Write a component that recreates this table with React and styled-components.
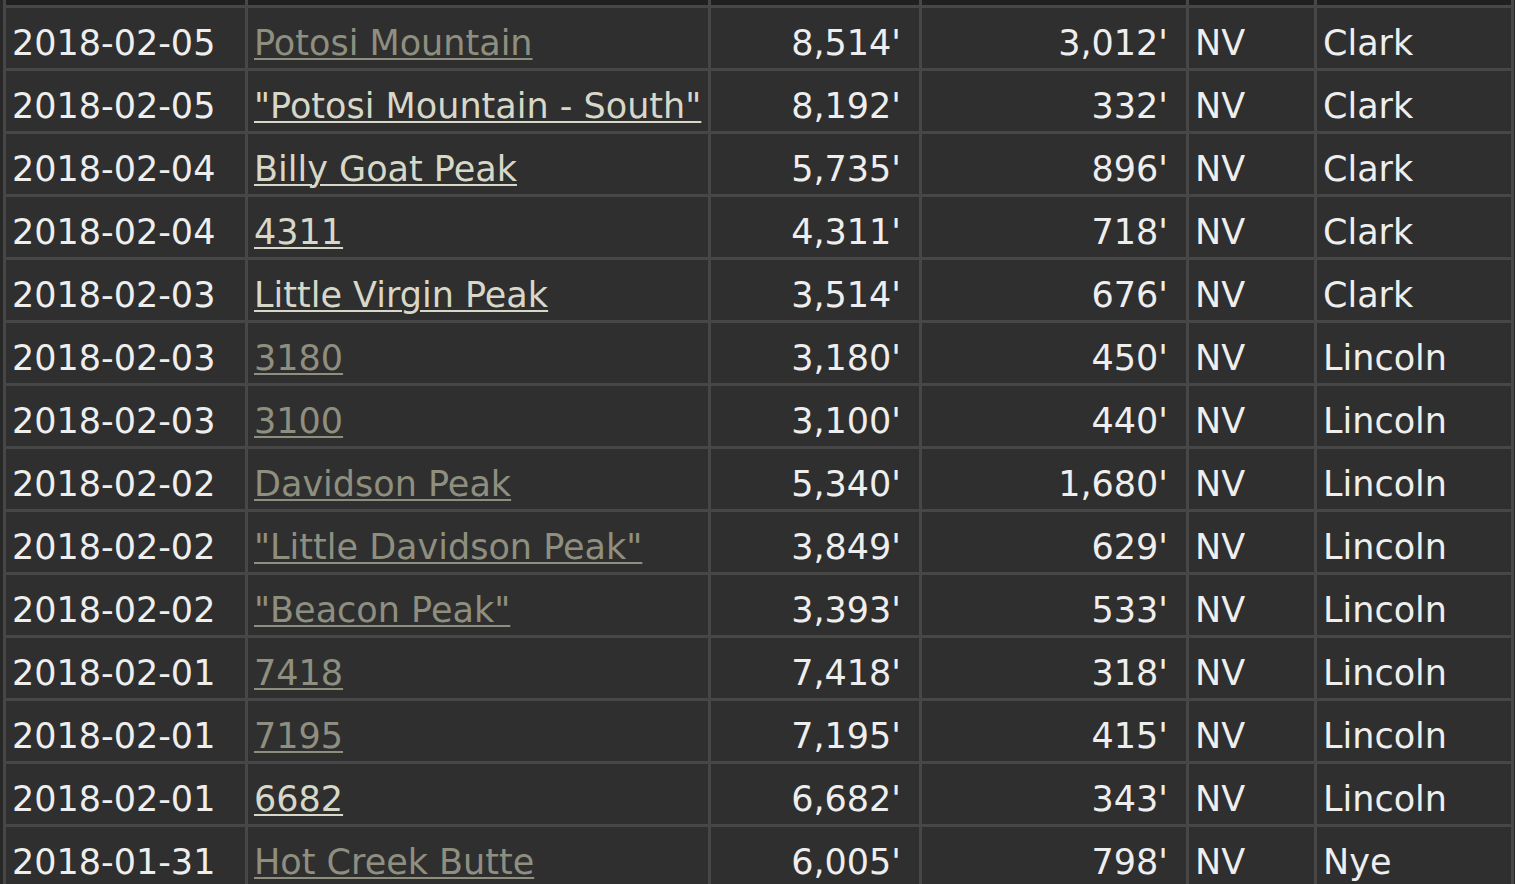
import React from "react";
import styled, { createGlobalStyle } from "styled-components";

const rows = [
  ["2018-02-05", "Potosi Mountain", true, "8,514'", "3,012'", "NV", "Clark"],
  ["2018-02-05", '"Potosi Mountain - South"', false, "8,192'", "332'", "NV", "Clark"],
  ["2018-02-04", "Billy Goat Peak", false, "5,735'", "896'", "NV", "Clark"],
  ["2018-02-04", "4311", false, "4,311'", "718'", "NV", "Clark"],
  ["2018-02-03", "Little Virgin Peak", false, "3,514'", "676'", "NV", "Clark"],
  ["2018-02-03", "3180", true, "3,180'", "450'", "NV", "Lincoln"],
  ["2018-02-03", "3100", true, "3,100'", "440'", "NV", "Lincoln"],
  ["2018-02-02", "Davidson Peak", true, "5,340'", "1,680'", "NV", "Lincoln"],
  ["2018-02-02", '"Little Davidson Peak"', true, "3,849'", "629'", "NV", "Lincoln"],
  ["2018-02-02", '"Beacon Peak"', true, "3,393'", "533'", "NV", "Lincoln"],
  ["2018-02-01", "7418", true, "7,418'", "318'", "NV", "Lincoln"],
  ["2018-02-01", "7195", true, "7,195'", "415'", "NV", "Lincoln"],
  ["2018-02-01", "6682", false, "6,682'", "343'", "NV", "Lincoln"],
  ["2018-01-31", "Hot Creek Butte", true, "6,005'", "798'", "NV", "Nye"],
];

function App() {
  return (
    <>
      <GlobalStyle />
      <Page>
        <Table>
          {/* bottom edge of the row scrolled out above */}
          {[0, 1, 2, 3, 4, 5].map((i) => (
            <CutCell key={"cut" + i} />
          ))}
          {rows.map(([date, name, visited, elev, prom, state, county], i) => (
            <React.Fragment key={i}>
              <Cell>{date}</Cell>
              <Cell>
                <PeakLink href="#" $visited={visited}>
                  {name}
                </PeakLink>
              </Cell>
              <Cell $right>{elev}</Cell>
              <Cell $right>{prom}</Cell>
              <Cell>{state}</Cell>
              <Cell>{county}</Cell>
            </React.Fragment>
          ))}
        </Table>
      </Page>
    </>
  );
}

export default App;

const GlobalStyle = createGlobalStyle`
  html, body {
    margin: 0;
    padding: 0;
    height: 100%;
    overflow: hidden;
    background-color: #282828;
  }
`;

const Page = styled.div`
  padding-left: 3px;
  font-family: "DejaVu Sans", Verdana, sans-serif;
  font-size: 35px;
  color: #eeeeee;
`;

const Table = styled.div`
  display: grid;
  grid-template-columns: 239px 460px 208px 264px 125px 194px;
  grid-template-rows: 5px;
  grid-auto-rows: 60px;
  gap: 3px;
  padding: 0 3px;
  width: max-content;
  background-color: #474747;
`;

const CutCell = styled.div`
  background-color: #202020;
`;

const Cell = styled.div`
  display: flex;
  align-items: center;
  justify-content: ${(p) => (p.$right ? "flex-end" : "flex-start")};
  padding: 9px ${(p) => (p.$right ? "18px" : "6px")} 0 6px;
  background-color: #2f2f2f;
  white-space: nowrap;
  overflow: hidden;
  -webkit-font-smoothing: antialiased;
`;

const PeakLink = styled.a`
  color: ${(p) => (p.$visited ? "#8f8f80" : "#d8d8c9")};
  text-decoration: underline;
  text-decoration-thickness: 2px;
  text-underline-offset: 3px;
`;
